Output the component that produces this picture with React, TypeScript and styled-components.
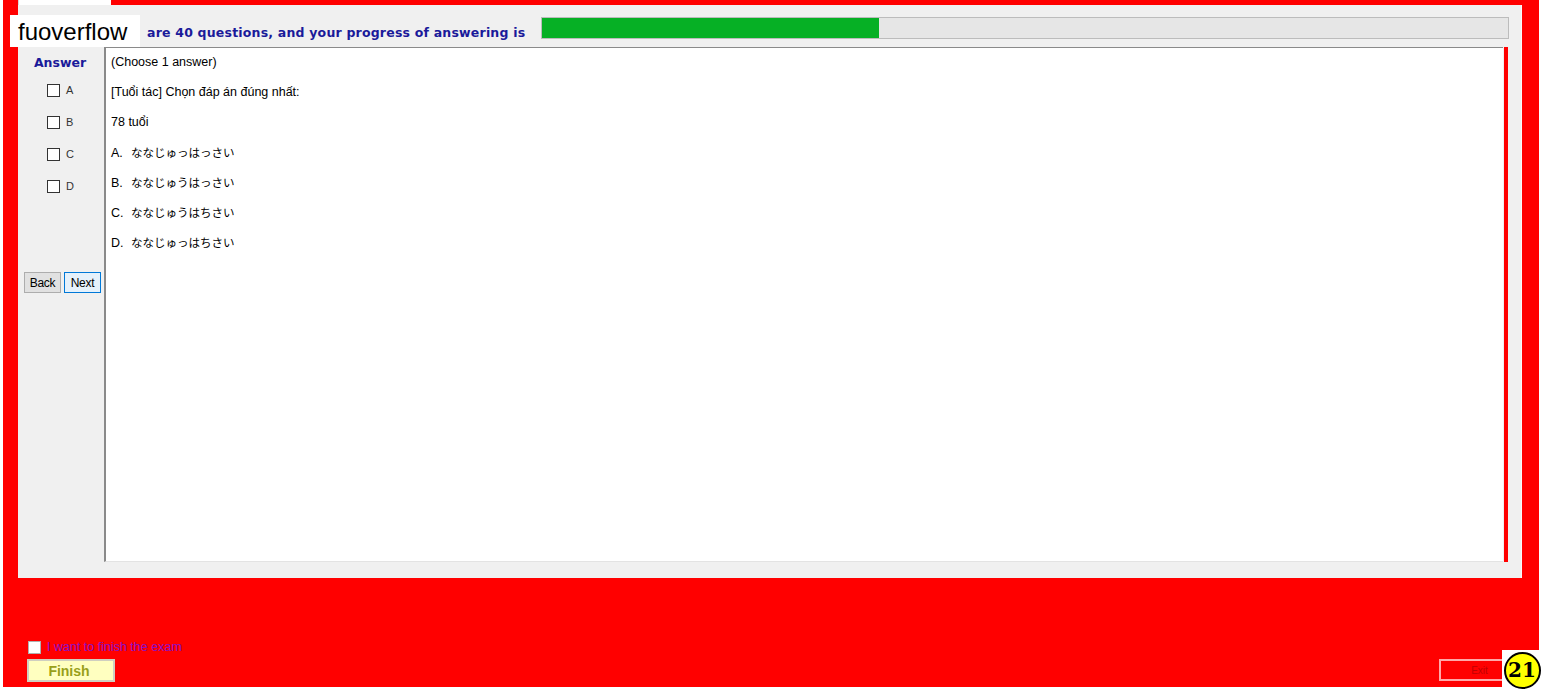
import React from "react";
import styled, { createGlobalStyle } from "styled-components";

const Global = createGlobalStyle`
  html, body { margin: 0; padding: 0; background: #ffffff; }
  body { font-family: "Liberation Sans", Arial, sans-serif; }
  #root { width: 1542px; height: 690px; overflow: hidden; position: relative; }
`;

const Frame = styled.div`
  margin-left: 3px;
  width: 1536px;
  height: 687px;
  background: #ff0000;
  display: flex;
  flex-direction: column;
`;

const TabStrip = styled.div`
  height: 5px;
  display: flex;
  padding-left: 15px;
`;

const Tab = styled.div`
  width: 92px;
  height: 5px;
  background: #ffffff;
  border-left: 1px solid #d8d8d8;
`;

const Panel = styled.div`
  margin-left: 15px;
  width: 1503px;
  height: 573px;
  background: #f0f0f0;
  border-right: 1px solid #fafafa;
  display: flex;
  flex-direction: column;
`;

const Header = styled.div`
  height: 42px;
  display: flex;
  align-items: flex-start;
`;

const HeaderText = styled.div`
  margin-left: 129px;
  margin-top: 20px;
  font-family: "DejaVu Sans", Verdana, sans-serif;
  font-weight: bold;
  font-size: 12.5px;
  letter-spacing: 0.2px;
  color: #1a1a9a;
  white-space: nowrap;
  width: 394px;
`;

const Progress = styled.div`
  margin-top: 12px;
  width: 966px;
  height: 20px;
  background: #e6e6e6;
  border: 1px solid #bcbcbc;
  display: flex;
`;

const ProgressFill = styled.div`
  height: 100%;
  background: #06b025;
`;

const Body = styled.div`
  flex: 1;
  display: flex;
  padding-bottom: 16px;
`;

const Side = styled.div`
  width: 86px;
  display: flex;
  flex-direction: column;
  padding-top: 8px;
`;

const AnswerTitle = styled.div`
  text-align: center;
  font-family: "DejaVu Sans", Verdana, sans-serif;
  font-weight: bold;
  font-size: 12.5px;
  line-height: 16px;
  color: #1a1a9a;
  padding-right: 2px;
`;

const Options = styled.div`
  margin-top: 3px;
  display: flex;
  flex-direction: column;
`;

const OptionRow = styled.label`
  height: 32px;
  display: flex;
  align-items: center;
  padding-left: 29px;
  font-size: 11px;
  color: #333;
`;

const Box = styled.span`
  width: 11px;
  height: 11px;
  border: 1px solid #333333;
  background: #ffffff;
  margin-right: 6px;
`;

const NavRow = styled.div`
  margin-top: 70px;
  padding-left: 6px;
  display: flex;
  gap: 3px;
`;

const NavButton = styled.button<{ $active?: boolean }>`
  width: 37px;
  height: 21px;
  padding: 0;
  font-family: "Liberation Sans", Arial, sans-serif;
  font-size: 12px;
  letter-spacing: -0.3px;
  color: #000;
  background: ${(p) => (p.$active ? "#e5f1fb" : "#e1e1e1")};
  border: 1px solid ${(p) => (p.$active ? "#0078d7" : "#adadad")};
`;

const Content = styled.div`
  width: 1399px;
  background: #ffffff;
  border-top: 1px solid #8a8a8a;
  border-left: 2px solid #8a8a8a;
  border-bottom: 1px solid #e3e3e3;
  display: flex;
  flex-direction: column;
  gap: 4px;
  padding-left: 5px;
  padding-top: 1px;
  box-sizing: border-box;
`;

const Line = styled.div`
  line-height: 26px;
  height: 26px;
  font-family: "Liberation Sans", Arial, "Noto Sans CJK JP", sans-serif;
  font-size: 12.5px;
  color: #000;
  white-space: nowrap;
`;

const Letter = styled.span`
  display: inline-block;
  width: 20px;
`;

const Jp = styled.span`
  font-family: "Noto Sans CJK JP", sans-serif;
  font-size: 11.5px;
`;

const RedStripe = styled.div`
  width: 4px;
  background: #ff0000;
  margin-left: 1px;
`;

const Footer = styled.div`
  flex: 1;
  display: flex;
  flex-direction: column;
  padding-left: 24px;
  position: relative;
`;

const FinishRow = styled.label`
  margin-top: 62px;
  display: flex;
  align-items: center;
  height: 14px;
  font-size: 12.5px;
  color: #8a10c8;
`;

const WhiteBox = styled.span`
  width: 11px;
  height: 11px;
  background: #ffffff;
  border: 1px solid #b0b0b0;
  margin-left: 1px;
  margin-right: 6px;
`;

const BottomRow = styled.div`
  margin-top: 5px;
  display: flex;
  align-items: flex-start;
  justify-content: space-between;
  padding-right: 33px;
`;

const FinishButton = styled.button`
  width: 88px;
  height: 23px;
  padding: 0 4px 0 0;
  background: #ffffc0;
  border: 2px solid #cfcfc0;
  font-family: "Liberation Sans", Arial, sans-serif;
  font-weight: bold;
  font-size: 14px;
  color: #98a01a;
`;

const ExitButton = styled.button`
  width: 67px;
  height: 22px;
  padding: 0 0 0 14px;
  background: #ff0000;
  border: 2px solid #ffa8a8;
  font-family: "Liberation Sans", Arial, sans-serif;
  font-size: 10px;
  color: #c00000;
`;

const Logo = styled.div`
  position: absolute;
  left: 10px;
  top: 15px;
  width: 130px;
  height: 32px;
  background: #ffffff;
  font-family: "Liberation Sans", Arial, sans-serif;
  font-size: 24px;
  line-height: 34px;
  color: #000;
  padding-left: 8px;
  box-sizing: border-box;
`;

const Badge = styled.div`
  position: absolute;
  right: 0;
  bottom: 0;
  width: 40px;
  height: 40px;
  background: #ffffff;
  display: flex;
  align-items: center;
  justify-content: center;
`;

const Circle = styled.div`
  width: 33px;
  height: 33px;
  border-radius: 50%;
  background: #ffff00;
  border: 2px solid #000;
  display: flex;
  align-items: center;
  justify-content: center;
  font-family: "DejaVu Serif", "Liberation Serif", serif;
  font-weight: bold;
  font-size: 20px;
  color: #000;
`;

const options = ["A", "B", "C", "D"];
const answers = [
  ["A.", "ななじゅっはっさい"],
  ["B.", "ななじゅうはっさい"],
  ["C.", "ななじゅうはちさい"],
  ["D.", "ななじゅっはちさい"],
];

export default function App() {
  const progress = 0.349;
  return (
    <>
      <Global />
      <Frame>
        <TabStrip>
          <Tab />
        </TabStrip>
        <Panel>
          <Header>
            <HeaderText>are 40 questions, and your progress of answering is</HeaderText>
            <Progress>
              <ProgressFill style={{ width: `${progress * 100}%` }} />
            </Progress>
          </Header>
          <Body>
            <Side>
              <AnswerTitle>Answer</AnswerTitle>
              <Options>
                {options.map((o) => (
                  <OptionRow key={o}>
                    <Box />
                    {o}
                  </OptionRow>
                ))}
              </Options>
              <NavRow>
                <NavButton>Back</NavButton>
                <NavButton $active>Next</NavButton>
              </NavRow>
            </Side>
            <Content>
              <Line>(Choose 1 answer)</Line>
              <Line>[Tuổi tác] Chọn đáp án đúng nhất:</Line>
              <Line>78 tuổi</Line>
              {answers.map(([l, t]) => (
                <Line key={l}>
                  <Letter>{l}</Letter>
                  <Jp>{t}</Jp>
                </Line>
              ))}
            </Content>
            <RedStripe />
          </Body>
        </Panel>
        <Footer>
          <FinishRow>
            <WhiteBox />
            I want to finish the exam
          </FinishRow>
          <BottomRow>
            <FinishButton>Finish</FinishButton>
            <ExitButton>Exit</ExitButton>
          </BottomRow>
        </Footer>
      </Frame>
      <Logo>fuoverflow</Logo>
      <Badge>
        <Circle>21</Circle>
      </Badge>
    </>
  );
}
